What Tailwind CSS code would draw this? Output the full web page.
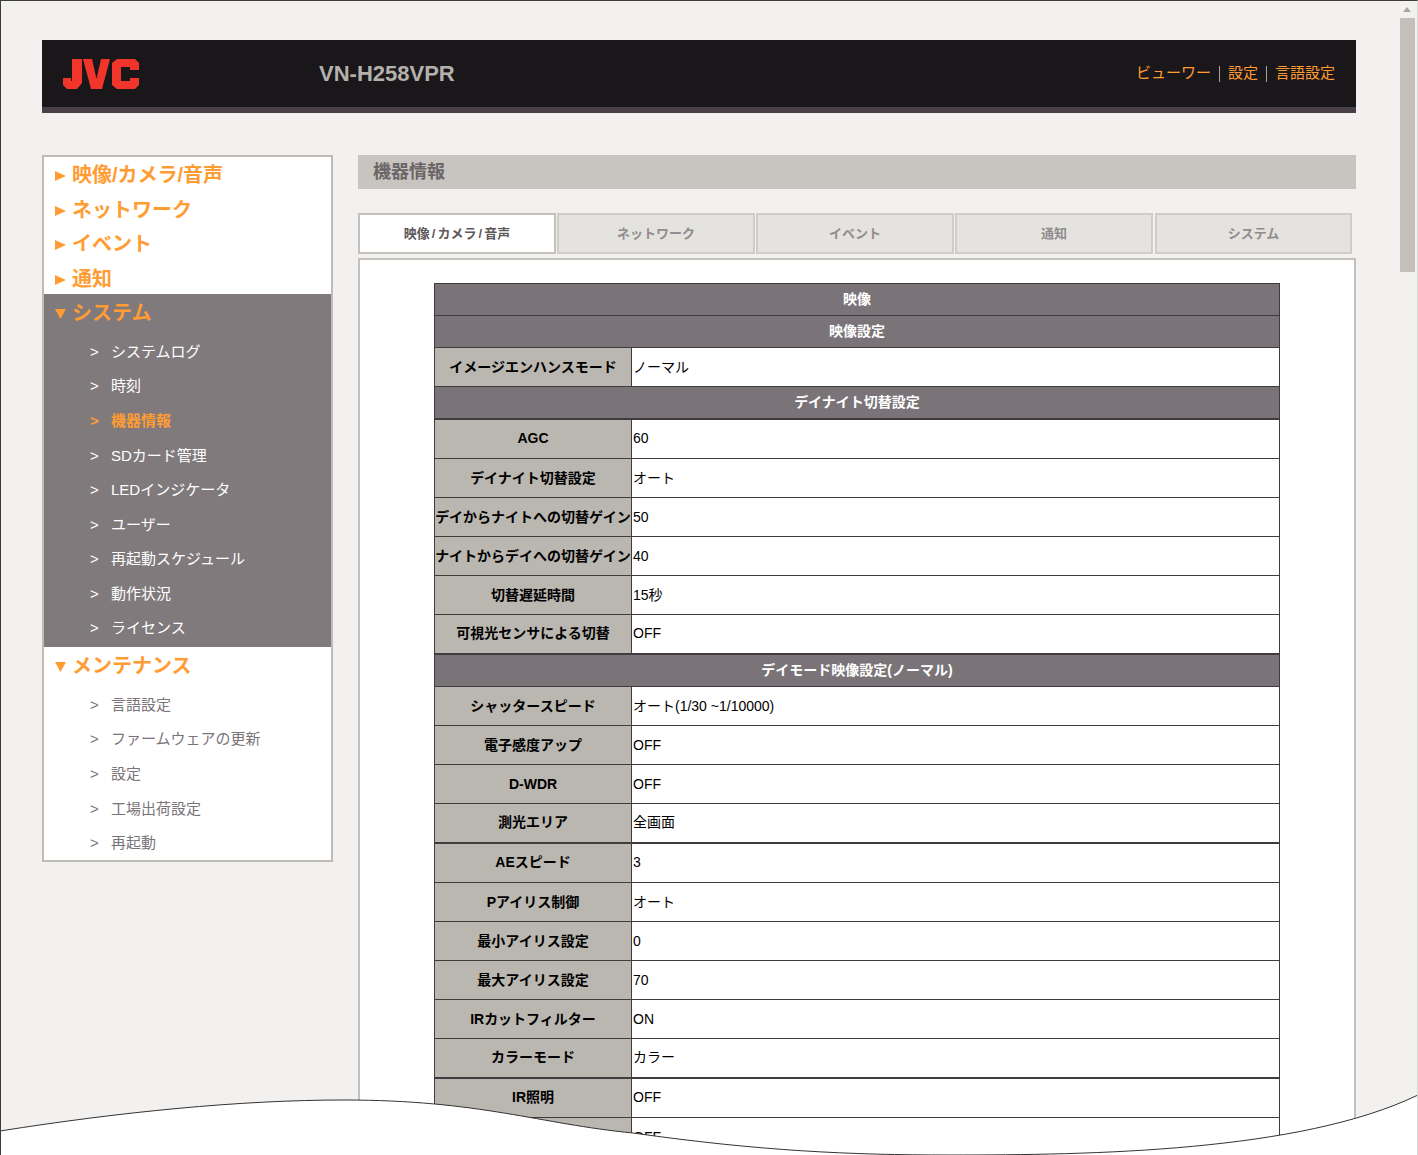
<!DOCTYPE html>
<html lang="ja">
<head>
  <meta charset="UTF-8" />
  <title>VN-H258VPR</title>
  <script src="https://cdn.jsdelivr.net/npm/@tailwindcss/browser@4"></script>
</head>
<body class="bg-[#f2f1ef] font-['Liberation_Sans','Noto_Sans_CJK_JP',sans-serif]">
<div class="relative h-[1155px] overflow-hidden border-t border-x border-[#3c3c3c] border-r-[#d8d8d8]">

  <!-- scrollbar -->
  <div class="absolute left-[1402px] top-[6px] w-0 h-0 border-x-[4px] border-b-[5px] border-x-transparent border-b-[#a8a5a1]"></div>
  <div class="absolute left-[1399px] top-[17px] w-[15px] h-[254px] bg-[#c3c0bb]"></div>

  <div class="ml-[41px] w-[1314px] pt-[39px]">
    <!-- header -->
    <header class="h-[73px] bg-[#1a171b] border-b-[6px] border-[#483f47] flex items-center justify-between pl-[21px] pr-[21px]">
      <div class="flex items-center">
        <svg width="77" height="30" viewBox="0 0 77 30" class="fill-[#f2352b]">
          <path d="M9 0h10v24l-5 6H4l-4-4v-7h8v3h1z" />
          <path d="M20 0h9l4.500 20L38 0h9l-8 30H28z" />
          <path d="M54 0h18l4 4v7h-9V8h-9v14h9v-3h9v7l-4 4H54l-5-4V4z" />
        </svg>
        <span class="ml-[179px] text-[22px] font-bold text-[#b4b1ac]">VN-H258VPR</span>
      </div>
      <div class="flex items-center text-[15px] text-[#ff9c33]">
        <span>ビューワー</span>
        <span class="mx-[8px] w-px h-[16px] bg-[#a8a5a1]"></span>
        <span>設定</span>
        <span class="mx-[8px] w-px h-[16px] bg-[#a8a5a1]"></span>
        <span>言語設定</span>
      </div>
    </header>

    <div class="flex gap-[25px] mt-[42px] items-start">
      <!-- sidebar -->
      <nav class="w-[291px] h-[707px] bg-white border-2 border-[#bfbcb7]">
        <div class="h-[137px]">
          <div class="h-[34.6px] pt-[5px] pl-[11px] flex items-start gap-[6px] text-[20px] leading-[26px] font-bold text-[#ff9c33]"><svg width="11" height="10" viewBox="0 0 11 10" class="mt-[9px] fill-[#ff9c33]"><path d="M0 0l11 5-11 5z" /></svg>映像/カメラ/音声</div>
          <div class="h-[34.6px] pt-[5px] pl-[11px] flex items-start gap-[6px] text-[20px] leading-[26px] font-bold text-[#ff9c33]"><svg width="11" height="10" viewBox="0 0 11 10" class="mt-[9px] fill-[#ff9c33]"><path d="M0 0l11 5-11 5z" /></svg>ネットワーク</div>
          <div class="h-[34.6px] pt-[5px] pl-[11px] flex items-start gap-[6px] text-[20px] leading-[26px] font-bold text-[#ff9c33]"><svg width="11" height="10" viewBox="0 0 11 10" class="mt-[9px] fill-[#ff9c33]"><path d="M0 0l11 5-11 5z" /></svg>イベント</div>
          <div class="h-[33.200px] pt-[5px] pl-[11px] flex items-start gap-[6px] text-[20px] leading-[26px] font-bold text-[#ff9c33]"><svg width="11" height="10" viewBox="0 0 11 10" class="mt-[9px] fill-[#ff9c33]"><path d="M0 0l11 5-11 5z" /></svg>通知</div>
        </div>
        <div class="bg-[#807a7d] h-[353px] text-white">
          <div class="h-[40.700px] pt-[6px] pl-[11px] flex items-start gap-[6px] text-[20px] leading-[26px] font-bold text-[#ff9c33]"><svg width="11" height="10" viewBox="0 0 11 10" class="mt-[9px] fill-[#ff9c33]"><path d="M0 0h11l-5.500 10z" /></svg>システム</div>
          <div id="sysMenu"></div>
        </div>
        <div class="text-[#7a7478]">
          <div class="h-[40.700px] pt-[6px] pl-[11px] flex items-start gap-[6px] text-[20px] leading-[26px] font-bold text-[#ff9c33]"><svg width="11" height="10" viewBox="0 0 11 10" class="mt-[9px] fill-[#ff9c33]"><path d="M0 0h11l-5.500 10z" /></svg>メンテナンス</div>
          <div id="maintMenu"></div>
        </div>
      </nav>

      <!-- main -->
      <main class="w-[998px]">
        <h1 class="h-[34px] pl-[15px] bg-[#c8c4c0] flex items-center text-[18px] font-bold text-[#6b6567]">機器情報</h1>

        <div class="flex gap-px mt-[24px] text-[13px] font-bold">
          <div class="w-[198px] h-[41px] flex items-center justify-center bg-white border-2 border-[#c4c1bc] text-[#5f595c]">映像<span class="mx-[2px]">/</span>カメラ<span class="mx-[2px]">/</span>音声</div>
          <div class="w-[198px] h-[41px] flex items-center justify-center bg-[#e4e3df] border-2 border-[#cfcdc9] text-[#918c8f]">ネットワーク</div>
          <div class="w-[198px] h-[41px] flex items-center justify-center bg-[#e4e3df] border-2 border-[#cfcdc9] text-[#918c8f]">イベント</div>
          <div class="w-[198px] h-[41px] flex items-center justify-center bg-[#e4e3df] border-2 border-[#cfcdc9] text-[#918c8f]">通知</div>
          <div class="w-[197px] ml-px h-[41px] flex items-center justify-center bg-[#e4e3df] border-2 border-[#cfcdc9] text-[#918c8f]">システム</div>
        </div>

        <div class="mt-[4px] h-[900px] bg-white border-t-2 border-x-2 border-[#c4c1bc] pt-[23px] pl-[74px]">
          <table class="w-[846px] table-fixed border-collapse text-[14px]">
            <colgroup><col class="w-[197px]" /><col /></colgroup>
            <tbody id="rows"></tbody>
          </table>
        </div>
      </main>
    </div>
  </div>

  <!-- torn page edge -->
  <svg class="absolute left-[-1px] top-[-1px]" width="1418" height="1155" viewBox="0 0 1418 1155">
    <path d="M0 1131 C 120 1112, 240 1100, 344 1100 C 480 1100, 540 1124, 633 1133 C 760 1151, 850 1155, 950 1155 C 1090 1155, 1300 1152, 1418 1095 V1156 H0 Z" class="fill-white stroke-[#333333] stroke-1" />
  </svg>
</div>

<script>
  const sysItems = ["システムログ", "時刻", "機器情報", "SDカード管理", "LEDインジケータ", "ユーザー", "再起動スケジュール", "動作状況", "ライセンス"];
  const maintItems = ["言語設定", "ファームウェアの更新", "設定", "工場出荷設定", "再起動"];

  function menuRow(name, active) {
    const color = active ? "text-[#ff9c33] font-bold" : "";
    return `<div class="h-[34.6px] pl-[46px] flex items-center text-[15px] ${color}"><span class="w-[21px] text-[15px]">&gt;</span>${name}</div>`;
  }
  document.getElementById("sysMenu").innerHTML = sysItems.map(n => menuRow(n, n === "機器情報")).join("");
  document.getElementById("maintMenu").innerHTML = maintItems.map(n => menuRow(n, false)).join("");

  // thick = heavier rule above the row, which also makes the row 1px taller
  const rows = [
    { head: "映像" },
    { head: "映像設定" },
    { k: "イメージエンハンスモード", v: "ノーマル" },
    { head: "デイナイト切替設定" },
    { k: "AGC", v: "60", thick: true },
    { k: "デイナイト切替設定", v: "オート" },
    { k: "デイからナイトへの切替ゲイン", v: "50" },
    { k: "ナイトからデイへの切替ゲイン", v: "40" },
    { k: "切替遅延時間", v: "15秒" },
    { k: "可視光センサによる切替", v: "OFF" },
    { head: "デイモード映像設定(ノーマル)", thick: true },
    { k: "シャッタースピード", v: "オート(1/30 ~1/10000)" },
    { k: "電子感度アップ", v: "OFF" },
    { k: "D-WDR", v: "OFF" },
    { k: "測光エリア", v: "全画面" },
    { k: "AEスピード", v: "3", thick: true },
    { k: "Pアイリス制御", v: "オート" },
    { k: "最小アイリス設定", v: "0" },
    { k: "最大アイリス設定", v: "70" },
    { k: "IRカットフィルター", v: "ON" },
    { k: "カラーモード", v: "カラー" },
    { k: "IR照明", v: "OFF", thick: true },
    { k: "", v: "OFF" },
  ];

  document.getElementById("rows").innerHTML = rows.map(r => {
    const top = r.thick ? "border-t-2" : "border-t";
    if (r.head) {
      const h = r.thick ? "h-[33px]" : "h-[32px]";
      return `<tr class="${h}"><td colspan="2" class="${top} border-x border-b border-[#3f3b3f] bg-[#7a7478] text-white font-bold text-center">${r.head}</td></tr>`;
    }
    const h = r.thick ? "h-[40px]" : "h-[39px]";
    return `<tr class="${h}"><td class="${top} border-x border-b border-[#3f3b3f] bg-[#bab6b0] text-black font-bold text-center whitespace-nowrap">${r.k}</td><td class="${top} border-x border-b border-[#3f3b3f] bg-white text-black pl-px">${r.v}</td></tr>`;
  }).join("");
</script>
</body>
</html>
